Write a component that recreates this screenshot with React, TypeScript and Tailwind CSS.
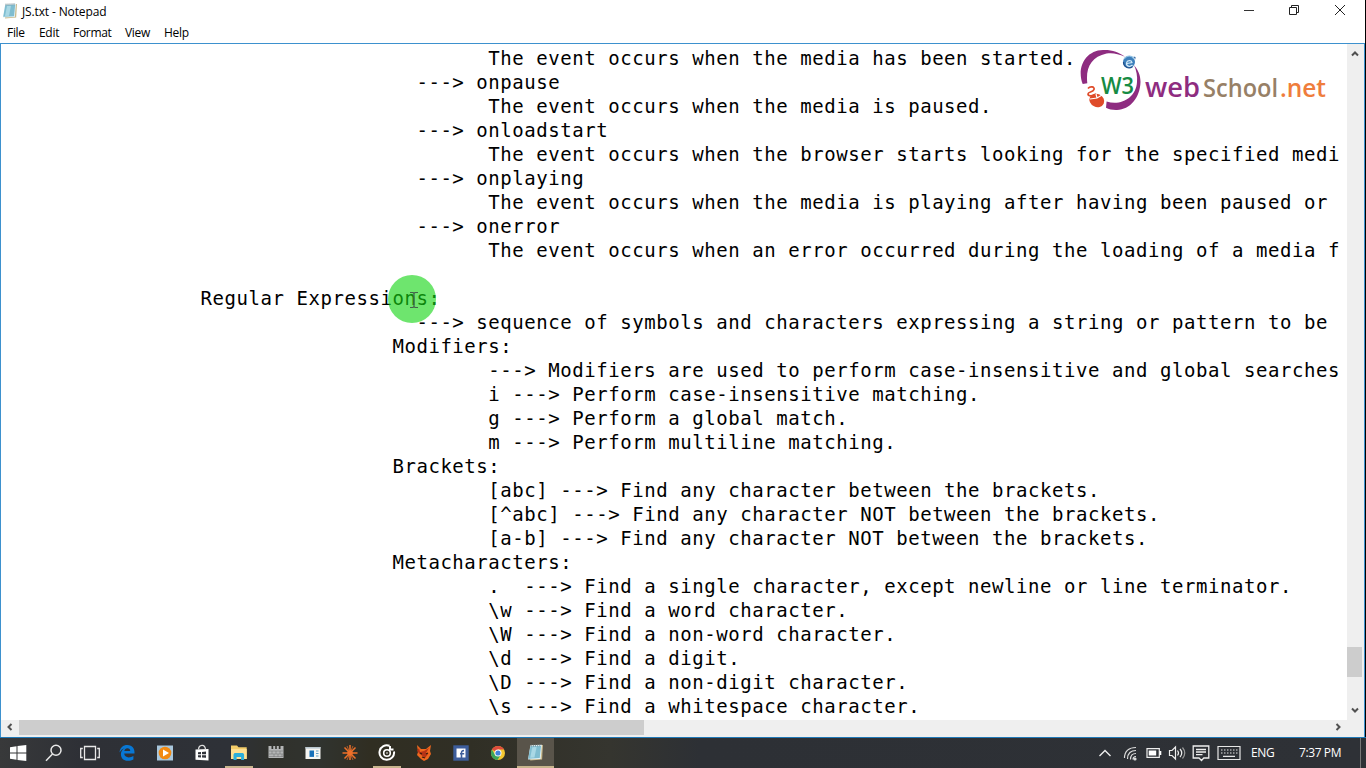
import React from "react";

type Line = [number, string];

const lines: Line[] = [
  [40, "The event occurs when the media has been started."],
  [34, "---> onpause"],
  [40, "The event occurs when the media is paused."],
  [34, "---> onloadstart"],
  [40, "The event occurs when the browser starts looking for the specified medi"],
  [34, "---> onplaying"],
  [40, "The event occurs when the media is playing after having been paused or"],
  [34, "---> onerror"],
  [40, "The event occurs when an error occurred during the loading of a media f"],
  [0, ""],
  [16, "Regular Expressions:"],
  [34, "---> sequence of symbols and characters expressing a string or pattern to be"],
  [32, "Modifiers:"],
  [40, "---> Modifiers are used to perform case-insensitive and global searches"],
  [40, "i ---> Perform case-insensitive matching."],
  [40, "g ---> Perform a global match."],
  [40, "m ---> Perform multiline matching."],
  [32, "Brackets:"],
  [40, "[abc] ---> Find any character between the brackets."],
  [40, "[^abc] ---> Find any character NOT between the brackets."],
  [40, "[a-b] ---> Find any character NOT between the brackets."],
  [32, "Metacharacters:"],
  [40, ".  ---> Find a single character, except newline or line terminator."],
  [40, "\\w ---> Find a word character."],
  [40, "\\W ---> Find a non-word character."],
  [40, "\\d ---> Find a digit."],
  [40, "\\D ---> Find a non-digit character."],
  [40, "\\s ---> Find a whitespace character."],
];

function NotepadIcon({ className }: { className: string }) {
  return (
    <svg className={className} viewBox="0 0 16 16">
      <path d="M4 1.5 15 1l-.8 13.5L3 15.5z" fill="#c9b98c" />
      <path d="M3.2 1.2 14 .8 12.8 14 1 14.6z" fill="#e4f3f7" />
      <path d="M3.2 2.2 13.2 1.8 12 13.2 1.2 13.8z" fill="#7fbdd0" />
      <path d="M5 3 9 2.8 7 12.8 3 13z" fill="#a9d8e5" />
      <path d="M4 .6v2M6 .5v2M8 .4v2M10 .3v2M12 .2v2" stroke="#6c8088" strokeWidth=".7" />
    </svg>
  );
}

function Chevron({ d, className }: { d: string; className: string }) {
  return (
    <svg className={className} viewBox="0 0 10 10" fill="none" stroke="#505050" strokeWidth="2">
      <path d={d} />
    </svg>
  );
}

function Logo() {
  return (
    <svg className="absolute left-[1078px] top-[44px] h-[68px] w-[252px]" viewBox="0 0 252 68">
      <path d="M4.7 40C-1.5 24 7 6.500 25 6 33 5.500 41 8 47 12.700 40 9.500 34 8.500 28.500 9.500 13 13 7.500 24 9.300 39.300z" fill="#8e2c80" />
      <path d="M56 21C60 26 62.500 31 62.500 38 62 54 52 65.500 39 66 35 66.200 31 65.300 28 63.800L28.600 57.500C43 62 58 54 59 38 59.500 32 58.500 27 56 21z" fill="#8e2c80" />
      <circle cx="51" cy="18" r="6" fill="#3d7fbb" />
      <path d="M46 15c3-4 8-4 10 0" fill="none" stroke="#8fc0e2" strokeWidth="1.200" />
      <path d="M54.500 21c-2.500 2.500-6.500 1-6-2 .5-3 5-3 5.500-.5l-5 1" fill="none" stroke="#d4eaf8" strokeWidth="1.200" />
      <path d="M45.500 18c0 5 5 7.500 9 4.800" fill="none" stroke="#1f4f8c" strokeWidth="1.200" />
      <path d="M55.500 12.500 57.500 13l-.2 2.500" fill="#285f9c" />
      <path d="M10 44.500c2-2.500 7-2 6 1s-6 2-6 4.500 5 2.500 8 0" fill="none" stroke="#df4b29" strokeWidth="1.700" />
      <ellipse cx="19" cy="56.500" rx="7.600" ry="6.500" transform="rotate(25 19 56)" fill="#df4b29" />
      <path d="m12 55 7-1 6-3.500M19 54l-1-4" fill="none" stroke="#fff" strokeWidth="1.200" />
      <text x="23" y="49.500" fontFamily="Open Sans, sans-serif" fontSize="24" fontWeight="600" fill="#168b43" textLength="33" lengthAdjust="spacingAndGlyphs">W3</text>
      <text x="67" y="53" fontFamily="Open Sans, sans-serif" fontSize="27" fontWeight="600" fill="#8e2c80" textLength="55" lengthAdjust="spacingAndGlyphs">web</text>
      <text x="125" y="53" fontFamily="Open Sans, sans-serif" fontSize="26" fontWeight="600" fill="#978066" textLength="75" lengthAdjust="spacingAndGlyphs">School</text>
      <text x="202" y="53" fontFamily="Open Sans, sans-serif" fontSize="25" fontWeight="600" fill="#ef7d3c" textLength="46" lengthAdjust="spacingAndGlyphs">.net</text>
    </svg>
  );
}

const icons: React.ReactNode[] = [
  <svg key="win" className="ml-px h-[18px] w-[18px]" viewBox="0 0 18 18" fill="#fff"><path d="M1 3.300 7.500 2.300V8.500H1zM8.500 2.100 17.300 1v7.500H8.500zM1 9.500h6.500v6.300L1 14.800zM8.500 9.500h8.800V17L8.500 15.900z" /></svg>,
  <svg key="search" className="h-[18px] w-[18px]" viewBox="0 0 18 18" fill="none" stroke="#e8e8e8" strokeWidth="1.500"><circle cx="11" cy="6.300" r="5" /><path d="M7.500 10 1 16.800" /></svg>,
  <svg key="view" className="mr-[2px] h-[18px] w-[20px]" viewBox="0 0 20 18" fill="none" stroke="#e8e8e8" strokeWidth="1.300"><path d="M4.500 2.500h11v13h-11zM2.800 4.500H.7v9h2.100M17.200 4.500h2.100v9h-2.100" /></svg>,
  <svg key="edge" className="mr-[2px] h-[18px] w-[18px]" viewBox="0 0 18 18"><path d="M1.500 8.500C2 3.500 5 1 9.300 1c5.200 0 7.600 3.600 7.200 8.600H6.200c.2 2.500 2 3.800 4.500 3.800 1.800 0 3.300-.5 4.700-1.300v3.400c-1.500.9-3.300 1.300-5.500 1.300-4.500 0-7-2.700-7-6.500 0-3 1.600-5.200 4.200-6.300-2.500.6-4.100 2.200-5.600 4.500zM6.300 7h5.900c0-1.800-1-2.800-2.800-2.800C7.800 4.200 6.600 5.300 6.300 7z" fill="#0877d4" /></svg>,
  <svg key="media" className="h-[18px] w-[18px]" viewBox="0 0 18 18"><path d="M1 1.500h16v15H1z" fill="#a9c7dd" /><circle cx="9" cy="9" r="6.300" fill="#f28a12" /><path d="m7 5.500 6 3.500-6 3.500z" fill="#fff" /></svg>,
  <svg key="store" className="h-[18px] w-[18px]" viewBox="0 0 18 18"><path d="M2.500 5.500 15.500 5v11.500L2.500 15.700z" fill="#fff" /><path d="M5.500 5.500c.3-5 6.500-6 7 0" fill="none" stroke="#ddd" strokeWidth="1.300" /><path d="M5 8.300 8 8v2.300H5zM9 7.900l4-.3v2.700H9zM5 11.200h3v2.200l-3-.2zM9 11.200h4v2.500l-4-.3z" fill="#30333a" /></svg>,
  <svg key="files" className="h-[18px] w-[18px]" viewBox="0 0 18 18"><path d="M1 1.500h6l1.500 1.800h8.200V15H1z" fill="#f4cd69" /><path d="M1 5h15.700v10H1z" fill="#ffe092" /><path d="M3.500 16V10.500l1-1.500h8.600l1 1.500V16h-3v-3H6.600v3z" fill="#2cafdb" /></svg>,
  <svg key="wall" className="h-[18px] w-[18px]" viewBox="0 0 18 18"><path d="M1.500 2h3v3h1.700V2h2v3h1.600V2h2v3h1.700V2h3v12h-15z" fill="#b4b6b6" /><path d="M2 7h14.500M2 10h14.500M2 12.500h14.500M5 7v3M9 7v3M13 7v3M7 10v3M11 10v3M15 10v3" stroke="#77787a" strokeWidth=".6" /></svg>,
  <svg key="app" className="h-[16px] w-[18px]" viewBox="0 0 18 16"><path d="M1.500 2h15v12h-15z" fill="#f5f5f2" /><path d="M1.500 2h15v1.600h-15z" fill="#b9c7d0" /><path d="M5.500 5.500H10v6.400H5.500z" fill="#1770b9" /><path d="M12 6h2.500M12 8.500h2.500M12 11h2.500" stroke="#629fc5" /></svg>,
  <svg key="burst" className="h-[18px] w-[18px]" viewBox="0 0 18 18" stroke="#ee702a" strokeWidth="1.500"><path d="M9 1v15M1.500 9h15M3.500 3.500l11 11M14.500 3.500l-11 11" /><path d="M6 2l6 14M12 2l-6 14" strokeWidth=".7" /><circle cx="9" cy="9" r="2" fill="#ee702a" /></svg>,
  <svg key="groove" className="h-[18px] w-[18px]" viewBox="0 0 18 18" fill="none" stroke="#fff"><path d="M11.500 1.800A7.300 7.300 0 1 0 16 7.500M12 2v3.500h3.500" strokeWidth="2" /><circle cx="9" cy="9" r="3.300" strokeWidth="1.600" /><circle cx="9" cy="9" r=".8" fill="#fff" stroke="none" /></svg>,
  <svg key="fox" className="h-[18px] w-[18px]" viewBox="0 0 18 18"><path d="m2 1 4 4h5l5-4-1 6 1 3-3 5-4 2-3-2-4-4 1-3z" fill="#ef681e" /><path d="m4 4 1 4 4-1 5-3-3 5 2 1-3 4-5-4-3-3" fill="#b63316" /><path d="m5 9 2 1M11 10l2-1M7 13l3 1" stroke="#351b0d" strokeWidth="1.300" /></svg>,
  <svg key="fb" className="h-[18px] w-[18px]" viewBox="0 0 18 18"><path d="M1.300 1.300h15.400v15.400H1.300z" fill="#3d5d9b" /><path d="M4.500 4.500h9v9h-9z" fill="#fff" /><path d="M9.500 14V8.500c0-1.300.8-2 2.500-1.800M8 9.700h4.200" fill="none" stroke="#3d5d9b" strokeWidth="1.600" /></svg>,
  <svg key="chrome" className="h-[16px] w-[16px]" viewBox="0 0 16 16"><circle cx="8" cy="8" r="7" fill="#f4c831" /><path d="M8 8 1.900 4.500A7 7 0 0 1 14.100 4.500H8z" fill="#dd4b3d" /><path d="M1.900 4.500A7 7 0 0 0 7.500 15L11 9.500 5 9.800z" fill="#3ba55b" /><circle cx="8" cy="8" r="3.500" fill="#fff" /><circle cx="8" cy="8" r="2.600" fill="#4284da" /></svg>,
  <NotepadIcon key="note" className="h-[17px] w-[17px]" />,
];

function Taskbar() {
  return (
    <footer className="flex h-[30px] w-full shrink-0 bg-[linear-gradient(90deg,#38393a_0px,#2e3036_80px,#2e3137_230px,#30312b_275px,#30332f_320px,#302e22_370px,#302f25_470px,#35352f_610px,#2d3035_700px,#2e3136_1366px)] text-white">
      <div className="-ml-px flex">
        {icons.map((icon, i) => (
          <div
            key={i}
            className={
              i === 14
                ? "flex h-[30px] w-[37px] items-center justify-center border-b-2 border-[#c8b58d] bg-[#59544a]"
                : "relative flex h-[30px] w-[36.980px] items-center justify-center"
            }
          >
            {icon}
            {(i === 6 || i === 10) && <span className="absolute bottom-0 left-[4px] h-[2px] w-[28px] bg-[#c8b58d]" />}
          </div>
        ))}
      </div>
      <div className="ml-auto flex h-full items-center font-['Open_Sans',sans-serif] text-[12px] tracking-[-0.4px]">
        <svg className="mr-[11px] h-[10px] w-[14px]" viewBox="0 0 14 10" fill="none" stroke="#eee" strokeWidth="1.400"><path d="m1.500 8 5.500-5.500L12.500 8" /></svg>
        <svg className="mr-[8px] h-[16px] w-[15px]" viewBox="0 0 15 16" fill="none" stroke="#ddd" strokeWidth="1.200"><path d="M1.500 13C1.500 6 6 2.500 13 2.500M4.500 14C4.500 8 8 5.500 13 5.500M7.500 14.500c0-4 2-6 5.500-6M10 14.500c0-2 1-3 3-3" /><circle cx="12" cy="14" r="1" fill="#fff" /></svg>
        <svg className="mr-[6px] h-[12px] w-[16px]" viewBox="0 0 16 12"><path d="M1 1.700h12.300v8.600H1z" fill="none" stroke="#eee" strokeWidth="1.200" /><path d="M2.700 3.500h7.500v5H2.700zM13.500 4h1.800v4h-1.800z" fill="#fff" /></svg>
        <svg className="mr-[6px] h-[16px] w-[18px]" viewBox="0 0 18 16" fill="none" stroke="#eee" strokeWidth="1.200"><path d="M1.500 5.500H4L7.500 2v12L4 10.500H1.500zM9.500 5.500q2 2.500 0 5M12 4q3.500 4 0 8" /><path d="M14.500 2.500q4.500 5.500 0 11" stroke="#999" /></svg>
        <svg className="mr-[7px] h-[18px] w-[18px]" viewBox="0 0 18 18" fill="none" stroke="#eee" strokeWidth="1.300"><path d="M1.200 2h15.600v12h-5L9.500 16.500 7 14H1.200zM4 5.500h10M4 8h10M4 10.700h6.500" /></svg>
        <svg className="mr-[10px] h-[16px] w-[24px]" viewBox="0 0 24 16" fill="none" stroke="#e6e6e6" strokeWidth="1.200"><path d="M1 1.500h22v13H1zM6 11.300h12" /><path d="M4 5h17M4 8h17" strokeDasharray="1.500 1.500" /></svg>
        <span className="w-[36px]">ENG</span>
        <span className="ml-[12px] w-[56px] whitespace-nowrap">7:37 PM</span>
        <span className="ml-[5px] h-full w-px bg-[#777]" />
        <span className="w-[5px]" />
      </div>
    </footer>
  );
}

export default function App() {
  return (
    <div className="relative flex h-[768px] w-[1366px] flex-col overflow-hidden bg-white text-black">
      <div className="flex h-[738px] w-full border-b border-[#2079b7]">
        <div className="flex w-[1365px] flex-col">
          <header className="flex h-[24px] shrink-0 items-center font-['Open_Sans',sans-serif] text-[12px]">
            <NotepadIcon className="mb-[2px] ml-[2px] mr-[4px] h-[16px] w-[16px]" />
            <span className="w-[90px] whitespace-nowrap tracking-[-0.130px]">JS.txt - Notepad</span>
            <svg className="mb-[4px] ml-auto mr-[33px] h-[12px] w-[12px]" viewBox="0 0 12 12" stroke="#333"><path d="M1 6.500h10" /></svg>
            <svg className="mb-[4px] mr-[34px] h-[12px] w-[12px]" viewBox="0 0 12 12" fill="none" stroke="#222"><path d="M1.500 3.500h7v7h-7zM3.500 3.500v-2h7v7h-2" /></svg>
            <svg className="mb-[4px] mr-[19px] h-[12px] w-[12px]" viewBox="0 0 12 12" stroke="#222"><path d="m1 1 10 10M11 1 1 11" /></svg>
          </header>
          <nav className="flex h-[18px] shrink-0 items-center pl-[7px] font-['Open_Sans',sans-serif] text-[12px] tracking-[-0.300px]">
            <span className="w-[32px]">File</span><span className="w-[34px]">Edit</span><span className="w-[52px]">Format</span><span className="w-[39px]">View</span><span>Help</span>
          </nav>
          <main className="mt-[1px] flex h-[694px] border-l border-r border-t border-[#3d91ce]">
            <div className="flex min-w-0 flex-1 flex-col">
              <pre className="h-[676px] overflow-hidden pl-[7.600px] pt-[2px] font-['DejaVu_Sans_Mono',monospace] text-[19px] leading-[24px] tracking-[0.555px]">
                {lines.map(([column, value], i) => <div key={i} className="h-[24px]">{" ".repeat(column) + value}</div>)}
              </pre>
              <div className="flex h-[17px] items-center bg-[#efefef]">
                <div className="flex w-[18px] justify-center"><Chevron className="mb-[3px] h-[10px] w-[10px]" d="M6.500 2 3.500 5l3 3" /></div>
                <div className="mb-[2px] h-[15px] w-[625px] bg-[#cdcdcd]" />
                <Chevron className="mb-[3px] ml-auto mr-[4px] h-[10px] w-[10px]" d="m3.500 2 3 3-3 3" />
              </div>
            </div>
            <div className="flex w-[17px] flex-col items-center bg-[#efefef] pr-[2px]">
              <Chevron className="mt-[5px] h-[10px] w-[10px]" d="m2 6.500 3-3 3 3" />
              <div className="mt-auto h-[30px] w-[15px] bg-[#cdcdcd]" />
              <Chevron className="mb-[22px] mt-[28px] h-[10px] w-[10px]" d="m2 3.500 3 3 3-3" />
            </div>
          </main>
        </div>
        <div className="w-px bg-black" />
      </div>
      <Taskbar />
      <div className="absolute left-[388px] top-[275px] h-[48px] w-[48px] rounded-full bg-[#15d515]/62" />
      <svg className="absolute left-[409px] top-[291px] h-[18px] w-[10px]" viewBox="0 0 10 18" fill="none" stroke="#45604a" strokeWidth="1.200"><path d="M1 1.500h3l1 1 1-1h3M5 2.500v13M1 16.500h3l1-1 1 1h3" /></svg>
      <Logo />
    </div>
  );
}
